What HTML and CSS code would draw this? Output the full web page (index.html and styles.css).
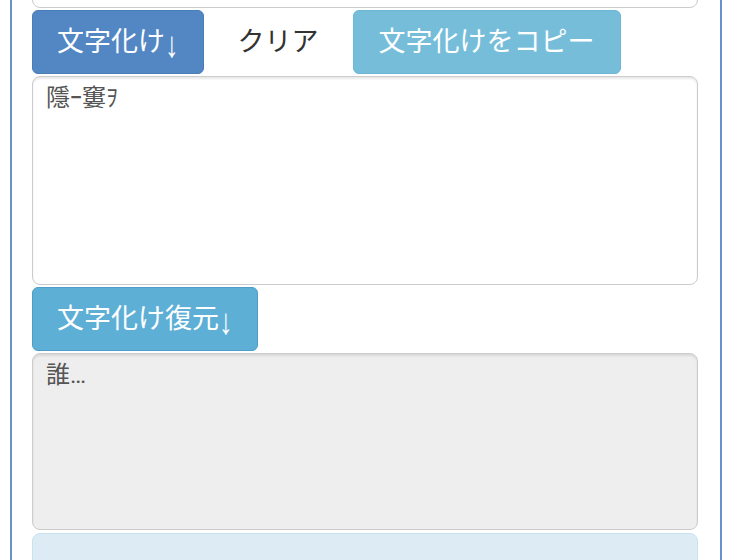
FILE: index.html
```html
<!DOCTYPE html>
<html lang="ja">
<head>
<meta charset="utf-8">
<title>文字化け</title>
<link rel="stylesheet" href="styles.css">
</head>
<body>
<div class="frame">
  <textarea class="box box-top"></textarea>
  <div class="btn-row">
    <button class="btn btn-primary">文字化け<span class="arrow">↓</span></button>
    <button class="btn btn-clear">クリア</button>
    <button class="btn btn-copy">文字化けをコピー</button>
  </div>
  <textarea class="box box-mid">隱ｰ窶ｦ</textarea>
  <div class="btn-row">
    <button class="btn btn-info">文字化け復元<span class="arrow">↓</span></button>
  </div>
  <textarea class="box box-ro" readonly>誰…</textarea>
  <div class="info"></div>
</div>
</body>
</html>
```

FILE: styles.css
```css
html, body {
  margin: 0;
  padding: 0;
  background: #fff;
  overflow: hidden;
}
body {
  font-family: "Liberation Sans", "Noto Sans CJK JP", sans-serif;
}
.frame {
  margin: -100px 0 0 10px;
  width: 712px;
  box-sizing: border-box;
  border-left: 2px solid #6a91c8;
  border-right: 2px solid #6a91c8;
  padding: 0 22px 40px 20px;
  display: flex;
  flex-direction: column;
  gap: 2px;
}
.box {
  display: block;
  width: 666px;
  box-sizing: border-box;
  margin: 0;
  border: 1px solid #ccc;
  border-radius: 8px;
  background: #fff;
  box-shadow: inset 0 2px 2px rgba(0, 0, 0, 0.09);
  padding: 4px 13px;
  font-family: Roboto, "Noto Sans CJK JP", sans-serif;
  font-size: 24px;
  line-height: 34px;
  color: #555;
  resize: none;
  outline: none;
  overflow: hidden;
}
.box-top { height: 108px; }
.box-mid { height: 209px; }
.box-ro {
  height: 177px;
  background: #eee;
}
.btn-row {
  display: flex;
  gap: 9px;
}
.btn {
  height: 64px;
  box-sizing: border-box;
  padding: 0 24px;
  border: 1px solid transparent;
  border-radius: 6px;
  font-family: "Liberation Sans", "Noto Sans CJK JP", sans-serif;
  font-size: 27px;
  line-height: 38px;
  color: #fff;
  background: transparent;
  display: flex;
  align-items: center;
  justify-content: center;
  white-space: nowrap;
}
.arrow {
  display: inline-block;
  transform: translateY(3px) scaleY(1.35);
}
.btn-primary {
  background: #5287c4;
  border-color: #4a7cb8;
}
.btn-clear {
  color: #333;
}
.btn-copy {
  padding: 0 25px;
  background: #76bdda;
  border-color: #6cb6d6;
}
.btn-info {
  background: #5eafd5;
  border-color: #4d9fc7;
}
.info {
  margin-top: 1px;
  width: 666px;
  height: 80px;
  box-sizing: border-box;
  border: 1px solid #c6e4f0;
  border-radius: 8px;
  background: #dcebf4;
}
```
